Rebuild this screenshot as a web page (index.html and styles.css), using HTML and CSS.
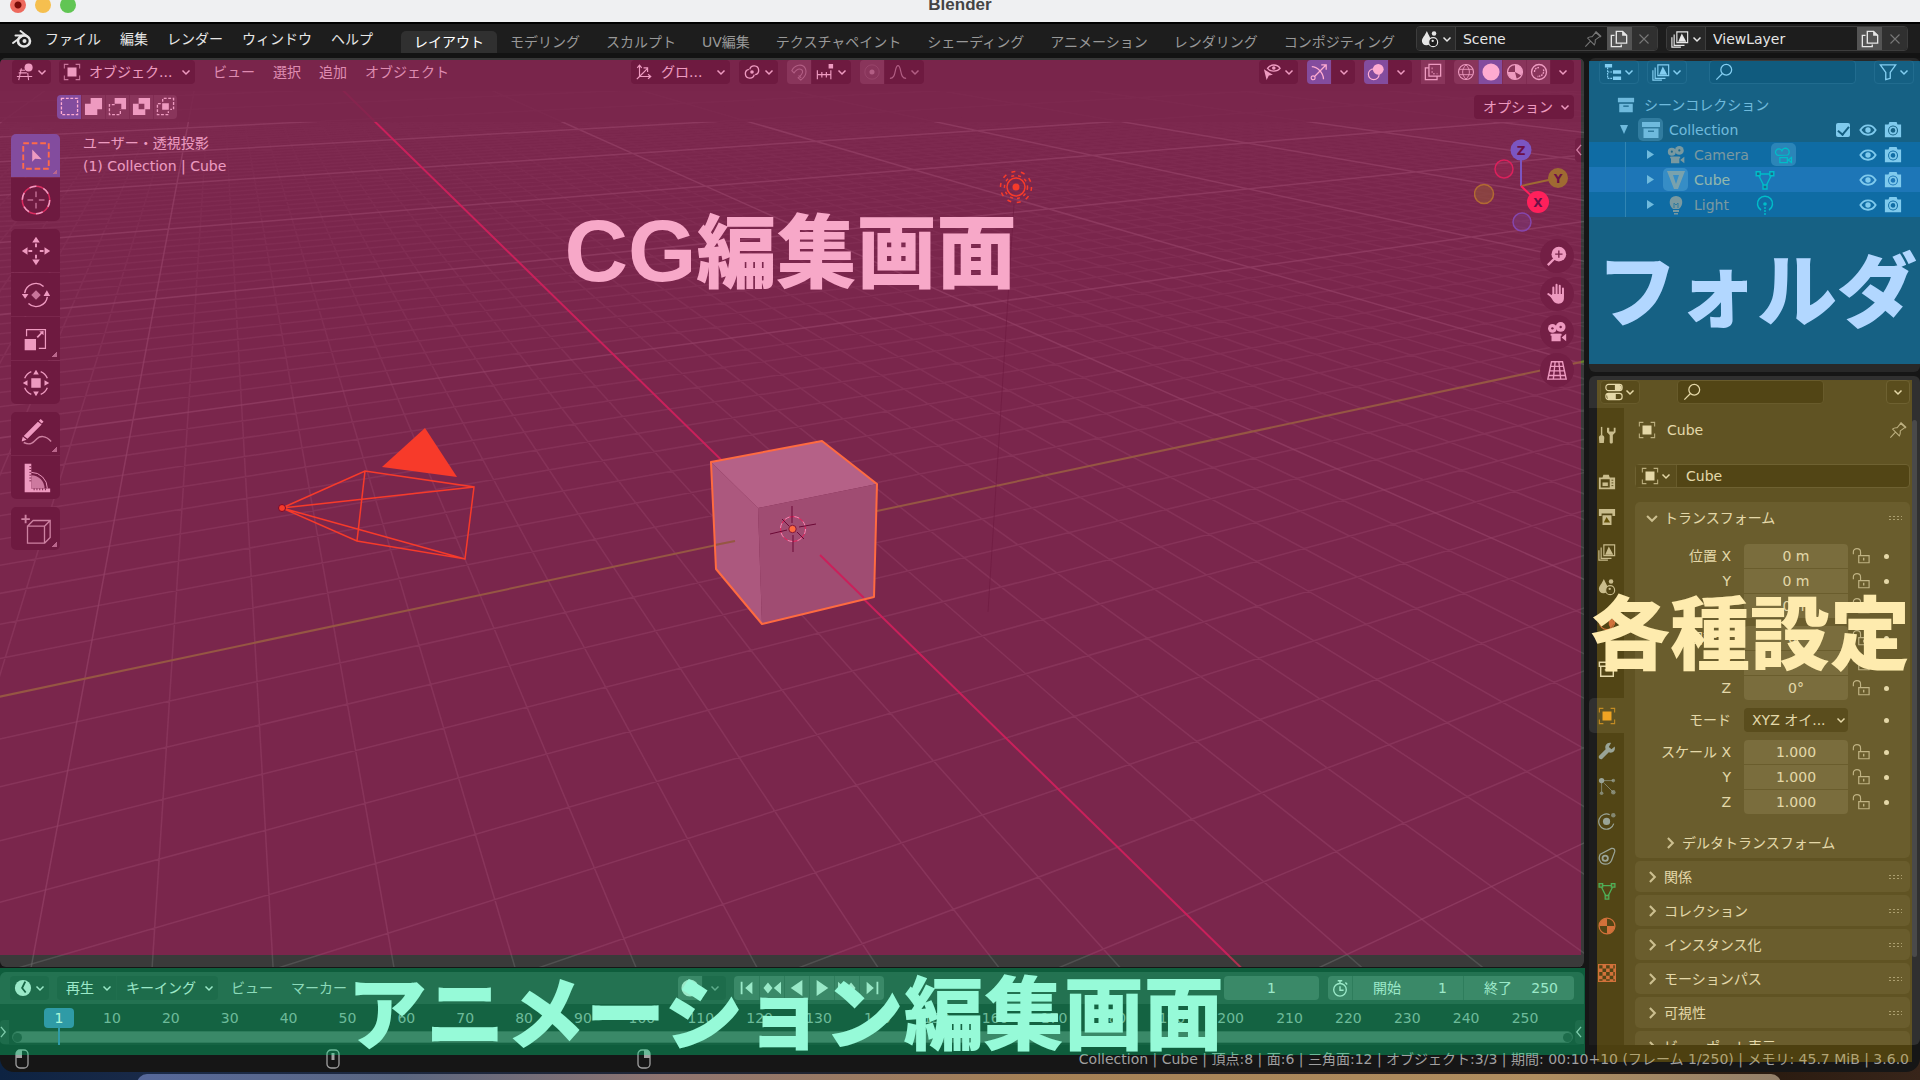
FILE: index.html
```html
<!DOCTYPE html>
<html lang="ja">
<head>
<meta charset="utf-8">
<title>Blender</title>
<link rel="stylesheet" href="styles.css">
</head>
<body>
<svg class="defs" aria-hidden="true">
  <symbol id="chev" viewBox="0 0 10 10"><path d="M1.500 3.500 5 7l3.500-3.500" fill="none" stroke="currentColor" stroke-width="1.500"/></symbol>
  <symbol id="blender" viewBox="0 0 20 20"><path d="M1 14 11 6.500H3.500M8.500 2l7 5.500" fill="none" stroke="currentColor" stroke-width="2" stroke-linecap="round" stroke-linejoin="round"/><ellipse cx="12" cy="12" rx="6" ry="5.500" fill="none" stroke="currentColor" stroke-width="2.600"/><circle cx="12.500" cy="12" r="2" fill="currentColor"/></symbol>
  <symbol id="view3d" viewBox="0 0 20 20"><path d="M4 8h6M1 15h17M6 6 3 19M13 11l1 8M3 11h9" fill="none" stroke="currentColor" stroke-width="1.200"/><circle cx="14" cy="5" r="4.500" fill="currentColor"/></symbol>
  <symbol id="object" viewBox="0 0 20 20"><path d="M5 5h10v10H5z" fill="currentColor"/><path d="M1.500 6V1.500H6M14 1.500h4.500V6M18.500 14v4.500H14M6 18.500H1.500V14" fill="none" stroke="currentColor" stroke-width="1.200" opacity=".7"/></symbol>
  <symbol id="axes" viewBox="0 0 20 20"><path d="M5 15V3M2.500 5.500 5 2.500l2.500 3M5 15h12M14.500 12.500l3 2.500-3 2.500M5 15l9-9M9.500 5.500H14V10M5 15l-3 3" fill="none" stroke="currentColor" stroke-width="1.300"/></symbol>
  <symbol id="pivot" viewBox="0 0 20 20"><circle cx="10" cy="10" r="2" fill="currentColor"/><path d="M7.500 7a5 5 0 1 1 6 6M12.500 13a5 5 0 1 1-6-6" fill="none" stroke="currentColor" stroke-width="1.500"/></symbol>
  <symbol id="magnet" viewBox="0 0 20 20"><path d="M2 8.500C5 2 14 0 17 6c2 5-1 10-5 13l-3-2.500c5-4 6-7 4-9-3-2-6 0-8.500 3.500zM9.500 14l3 2.500" fill="none" stroke="currentColor" stroke-width="1.200"/></symbol>
  <symbol id="snap" viewBox="0 0 20 20"><path d="M1 13h16M1.500 8v10M6.500 10v6M11.500 10v6M16.500 8v10" fill="none" stroke="currentColor" stroke-width="1.300"/><path d="M14 1h5v5h-5z" fill="currentColor"/></symbol>
  <symbol id="prop" viewBox="0 0 20 20"><circle cx="10" cy="10" r="8" fill="none" stroke="currentColor" opacity=".4"/><circle cx="10" cy="10" r="2.800" fill="currentColor"/></symbol>
  <symbol id="curve" viewBox="0 0 20 20"><path d="M1 17c4 0 5-3 6-8s2-6 3-6 2 1 3 6 2 8 6 8" fill="none" stroke="currentColor" stroke-width="1.300"/></symbol>
  <symbol id="selvis" viewBox="0 0 20 20"><path d="M5 6c3-5 11-5 14 0-3 4-11 4-14 0z" fill="none" stroke="currentColor" stroke-width="1.500"/><circle cx="12" cy="5.500" r="2" fill="currentColor"/><path d="M1 7l10 6-4.500 1L4 19z" fill="currentColor"/></symbol>
  <symbol id="gizmo" viewBox="0 0 20 20"><path d="M2 4c6 0 13 7 13 14M4.500 15.500 18 2M12.500 2H18v5.500" fill="none" stroke="currentColor" stroke-width="1.400"/><circle cx="3.500" cy="16.500" r="2.200" fill="none" stroke="currentColor" stroke-width="1.200"/></symbol>
  <symbol id="overlay" viewBox="0 0 20 20"><circle cx="12.500" cy="7" r="6" fill="currentColor"/><circle cx="7.500" cy="12.500" r="6" fill="none" stroke="currentColor" stroke-width="1.300"/></symbol>
  <symbol id="xray" viewBox="0 0 20 20"><path d="M5.500 1.500h13v13h-13zM5 5.500H1.500v13h13V15" fill="none" stroke="currentColor" stroke-width="1.400"/><path d="M9 5v7h6" fill="none" stroke="currentColor" stroke-dasharray="2 2"/></symbol>
  <symbol id="wire" viewBox="0 0 20 20"><circle cx="10" cy="10" r="8.300" fill="none" stroke="currentColor" stroke-width="1.200"/><path d="M10 2c-5 5-5 11 0 16M10 2c5 5 5 11 0 16M2.500 7h15M2.500 13h15" fill="none" stroke="currentColor"/></symbol>
  <symbol id="solid" viewBox="0 0 20 20"><circle cx="10" cy="10" r="9.500" fill="currentColor"/></symbol>
  <symbol id="material" viewBox="0 0 20 20"><circle cx="10" cy="10" r="8.300" fill="none" stroke="currentColor" stroke-width="1.400"/><path d="M10 2v8l7 4c3-6-1-12-7-12zM10 10H2c0 5 5 9 10 8z" fill="currentColor"/></symbol>
  <symbol id="matball" viewBox="0 0 20 20"><circle cx="10" cy="10" r="8.800" fill="none" stroke="currentColor" stroke-width="1.400"/><path d="M10 1.500V10H1.500A8.500 8.500 0 0 1 10 1.500zM10 10h8.500a8.500 8.500 0 0 1-8.500 8.500z" fill="currentColor"/></symbol>
  <symbol id="rendered" viewBox="0 0 20 20"><circle cx="10" cy="10" r="8.300" fill="none" stroke="currentColor" stroke-width="1.500"/><path d="M5 10c0-3 2-5 5-5M15 7c1 5-2 8-7 8" fill="none" stroke="currentColor" stroke-width="1.500" stroke-dasharray="2 1"/></symbol>
  <symbol id="sel1" viewBox="0 0 20 20"><path d="M1.500 1.500h17v17h-17z" fill="none" stroke="currentColor" stroke-width="1.400" stroke-dasharray="3 1.700"/></symbol>
  <symbol id="sel2" viewBox="0 0 20 20"><path d="M7 1h12v12h-5v6H1V7h6z" fill="currentColor"/></symbol>
  <symbol id="sel3" viewBox="0 0 20 20"><path d="M7 1h12v12h-5V7H7z" fill="currentColor"/><path d="M7 8H1.500v10.500H13V13" fill="none" stroke="currentColor" stroke-width="1.400" stroke-dasharray="3 1.700"/></symbol>
  <symbol id="sel4" viewBox="0 0 20 20"><path fill-rule="evenodd" d="M7 1h12v12h-5v6H1V7h6zM7 7v6h6V7z" fill="currentColor"/></symbol>
  <symbol id="sel5" viewBox="0 0 20 20"><path d="M6.500 6.500h7v7h-7z" fill="currentColor"/><path d="M7 5V1.500h11.500V13H15M5 7H1.500v11.500H13V15" fill="none" stroke="currentColor" stroke-width="1.400" stroke-dasharray="3 1.700"/></symbol>
  <symbol id="t-select" viewBox="0 0 36 36"><path d="M4.500 4.500h27v27h-27z" fill="none" stroke="#ff9f35" stroke-width="2" stroke-dasharray="6 3"/><path d="M14 11v13l3-3 7 .500z" fill="currentColor"/></symbol>
  <symbol id="t-cursor" viewBox="0 0 36 36"><circle cx="18" cy="18" r="14.500" fill="none" stroke="#c84055" stroke-width="1.600"/><circle cx="18" cy="18" r="14.500" fill="none" stroke="currentColor" stroke-width="1.600" stroke-dasharray="7.500 7.700"/><path d="M18 9v6M18 21v6M9 18h6M21 18h6" stroke="currentColor"/></symbol>
  <symbol id="t-move" viewBox="0 0 36 36"><path d="M18 3l4 6h-8zM18 33l4-6h-8zM3 18l6-4v8zM33 18l-6-4v8z" fill="currentColor"/><path d="M18 10v4M18 22v4M10 18h4M22 18h4" stroke="currentColor" stroke-width="2"/></symbol>
  <symbol id="t-rotate" viewBox="0 0 36 36"><path d="M6 16a12 12 0 0 1 20-7M30 20a12 12 0 0 1-20 7" fill="none" stroke="currentColor" stroke-width="1.500"/><path d="M3 17h7l-3.500 5zM26 19h7l-3.500-6z" fill="currentColor"/><path d="M18 13l5 5-5 5-5-5z" fill="currentColor" opacity=".7"/></symbol>
  <symbol id="t-scale" viewBox="0 0 36 36"><path d="M6 18h12v12H6zM26 9.500V14l-1.700-1.500L20 17l-1.300-1.300L23 11.500 21.500 10z" fill="currentColor"/><path d="M8 15V8h20v20h-7" fill="none" stroke="currentColor" stroke-width="1.300"/></symbol>
  <symbol id="t-transform" viewBox="0 0 36 36"><path d="M13 13h10v10H13zM18 4l3 5h-6zM18 32l3-5h-6zM4 18l5-3v6zM32 18l-5-3v6z" fill="currentColor"/><path d="M6 13a13 13 0 0 1 7-7M23 6a13 13 0 0 1 7 7M30 23a13 13 0 0 1-7 7M13 30a13 13 0 0 1-7-7" fill="none" stroke="currentColor" stroke-width="1.400"/></symbol>
  <symbol id="t-annotate" viewBox="0 0 36 36"><path d="M5 20 20 5l4 3L9 23zM3 25l1-4 4 3-5 2zM21 4l2-2 3 3-2 2z" fill="currentColor"/><path d="M5 27c8 4 11-1 14-4s9-4 15 3" fill="none" stroke="#b5c0b8" stroke-width="1.500"/></symbol>
  <symbol id="t-measure" viewBox="0 0 36 36"><path d="M6 3h7v26h20v4H6z" fill="currentColor"/><path d="M13 15a14 14 0 0 1 14 14H13z" fill="#b5b5b5"/><path d="M13 12a17 17 0 0 1 17 17" fill="none" stroke="currentColor"/><path d="M11 6h2M11 9h2M11 12h2M11 15h2M11 18h2M11 21h2M16 29v2M19 29v2M22 29v2M25 29v2M28 29v2" stroke="#333"/></symbol>
  <symbol id="t-add" viewBox="0 0 36 36"><path d="M7 3v9M2.500 7.500h9" stroke="#b5c0b8" stroke-width="2"/><path d="M9 15h18v18H9zM9 15l6-6h18v18l-6 6M27 15l6-6" fill="none" stroke="#b5c0b8" stroke-width="1.400"/></symbol>
  <symbol id="n-zoom" viewBox="0 0 24 24"><circle cx="14" cy="10" r="8" fill="currentColor"/><path d="M9 15 2 22" stroke="currentColor" stroke-width="2.500"/><path d="M14 6v8M10 10h8" stroke="#3a3a3a" stroke-width="1.500"/></symbol>
  <symbol id="n-hand" viewBox="0 0 24 24"><path d="M8 14V5M11.500 13V2M15 13V3M18.500 14V6M8 16l-5.500-4" fill="none" stroke="currentColor" stroke-width="2.200" stroke-linecap="round"/><path d="M7 12h12.600v4c0 4-2 6.500-6 6.500s-5-1.500-9-8z" fill="currentColor"/></symbol>
  <symbol id="cam" viewBox="0 0 24 24"><circle cx="7" cy="8" r="4.800" fill="currentColor"/><circle cx="16" cy="6.500" r="5.300" fill="currentColor"/><path d="M6 14h10v8H6zM17 18l5-4v8z" fill="currentColor"/><path d="M5 14h12v2H5z" fill="currentColor"/><circle cx="7" cy="8" r="1.300" fill="#333"/><circle cx="16" cy="6.500" r="1.300" fill="#333"/></symbol>
  <symbol id="camline" viewBox="0 0 24 24"><path d="M5 12.500a4 4 0 1 1 4.500-5.500 4.500 4.500 0 1 1 7 5zM7 15h9v6H7zM17 18l4-3v6z" fill="none" stroke="currentColor" stroke-width="1.500"/></symbol>
  <symbol id="n-grid" viewBox="0 0 24 24"><path d="M6 3h12l4 19H2zM5 8h14M4 13h16M3 18h18M10 3 8 22M14 3l2 19" fill="none" stroke="currentColor" stroke-width="1.500"/></symbol>
  <symbol id="scene" viewBox="0 0 20 20"><path d="M6.500 1c2 5 4.500 8 4.500 11s-2 5-5 5-5-2-5-5 3.500-6 5.500-11z" fill="currentColor"/><circle cx="14.500" cy="4" r="2.500" fill="currentColor"/><circle cx="13.500" cy="13.500" r="5" fill="#1d1d1d" stroke="currentColor" stroke-width="1.300"/><circle cx="13" cy="12" r="1.300" fill="currentColor"/></symbol>
  <symbol id="vlayer" viewBox="0 0 20 20"><path d="M6.500 2h12v12h-12zM3.500 5v12H15M1 8v11h10" fill="none" stroke="currentColor" stroke-width="1.300"/><path d="M8 13l4-9 5 9z" fill="currentColor"/></symbol>
  <symbol id="copy" viewBox="0 0 20 20"><path d="M7 1.500h7l4.500 4.500v8.500H7zM5 6H1.500v12.500h11V16" fill="none" stroke="currentColor" stroke-width="1.500"/><path d="M13.500 1v5.500H19z" fill="currentColor"/></symbol>
  <symbol id="x" viewBox="0 0 20 20"><path d="M5 5l10 10M15 5 5 15" stroke="currentColor" stroke-width="1.200"/></symbol>
  <symbol id="pin" viewBox="0 0 20 20"><path d="M1.500 18.500 7.500 12M4 9c2-2 4-1.500 5-1.500L13.500 2l5 4.500-6 4.500c0 1.500.500 3.500-1 5.500zM12 2l7 6" fill="none" stroke="currentColor" stroke-width="1.200"/></symbol>
  <symbol id="tree" viewBox="0 0 20 20"><path d="M1 1h8v4H1zM10 8h9v4h-9zM10 15h9v4h-9z" fill="currentColor"/><path d="M4 5v12h6M4 10h6" fill="none" stroke="currentColor" stroke-width="1.300" stroke-dasharray="2 1"/></symbol>
  <symbol id="search" viewBox="0 0 20 20"><circle cx="12.500" cy="7.500" r="6" fill="none" stroke="currentColor" stroke-width="1.400"/><path d="M8 12 1.500 18.500" stroke="currentColor" stroke-width="1.400"/></symbol>
  <symbol id="filter" viewBox="0 0 20 20"><path d="M1.500 2h17l-6 8.500V17l-5 1.500v-8z" fill="none" stroke="currentColor" stroke-width="1.500"/></symbol>
  <symbol id="box" viewBox="0 0 20 20"><path d="M1 2h18v5H1z" fill="currentColor"/><path fill-rule="evenodd" d="M2.500 8.500h15V18h-15zM7 10.500v1.500h6v-1.500z" fill="currentColor"/></symbol>
  <symbol id="boxline" viewBox="0 0 20 20"><path d="M1.500 2.500h17V7h-17zM3 7v11h14V7M7.500 11h5" fill="none" stroke="currentColor" stroke-width="1.600"/></symbol>
  <symbol id="eye" viewBox="0 0 20 20"><path d="M1.500 10c4-7 13-7 17 0-4 7-13 7-17 0z" fill="none" stroke="currentColor" stroke-width="2"/><circle cx="10" cy="10" r="3" fill="currentColor"/></symbol>
  <symbol id="photo" viewBox="0 0 20 20"><path fill-rule="evenodd" d="M1 4h4l1-3h8l1 3h4v14H1zM10 5a5.500 5.500 0 1 0 .1 0z" fill="currentColor"/><circle cx="10" cy="10.500" r="3.500" fill="none" stroke="currentColor" stroke-width="1.800"/></symbol>
  <symbol id="tri" viewBox="0 0 20 20"><path fill-rule="evenodd" d="M1 1h18l-7 18H8zM7 5l3 9 3-9z" fill="currentColor"/></symbol>
  <symbol id="mesh" viewBox="0 0 20 20"><path d="M3 4h14M3.500 5 9 16M16.500 5 11 16" fill="none" stroke="currentColor" stroke-width="1.400"/><path d="M1.200 1.700h4v4h-4zM14.800 1.700h4v4h-4zM8 15h4v4H8z" fill="#333" stroke="currentColor" stroke-width="1.400"/></symbol>
  <symbol id="bulb" viewBox="0 0 20 20"><path d="M7 14C2 10 2.500 1 10 1s8 9 3 13zM7 15h6v2H7zM8 18h4v1.500H8z" fill="currentColor"/><path d="M8 13V8l2 2 2-2v5" fill="none" stroke="#555"/></symbol>
  <symbol id="bulbline" viewBox="0 0 20 20"><path d="M6 15a7.500 7.500 0 1 1 8 0" fill="none" stroke="currentColor" stroke-width="1.500"/><circle cx="10" cy="9" r="1.800" fill="currentColor"/><path d="M10 12v8" stroke="currentColor" stroke-width="1.400" stroke-dasharray="2 1"/></symbol>
  <symbol id="props" viewBox="0 0 20 20"><rect x="1" y="1.500" width="18" height="7" rx="3" fill="none" stroke="currentColor" stroke-width="1.300"/><rect x="1" y="11.500" width="18" height="7" rx="3" fill="none" stroke="currentColor" stroke-width="1.300"/><path d="M11 2h5l2.500 2v3L16 8h-5zM2 12h10v6H3z" fill="currentColor"/></symbol>
  <symbol id="tool" viewBox="0 0 20 20"><path d="M4 1v9" stroke="currentColor" stroke-width="1.600"/><path d="M1 13c0-4 6-4 6 0l-.500 6h-5zM10 2v5l3 3v8c0 2 3.500 2 3.500 0v-8l3-3V2l-2 0v4h-5V2z" fill="currentColor"/></symbol>
  <symbol id="render" viewBox="0 0 20 20"><path fill-rule="evenodd" d="M1 5h4l1-3h6l1 3h6v13H1zM3 7v9h10V7z" fill="currentColor"/><path d="M4.500 10h7v5h-7zM15 8h2M15 11h2M15 14h2" fill="currentColor" stroke="#222"/></symbol>
  <symbol id="output" viewBox="0 0 20 20"><path d="M1 1h18v8h-3V6H4v3H1zM5 8h10v11H5z" fill="currentColor"/><path d="M6.500 16l3-6 4 6z" fill="#38300f"/></symbol>
  <symbol id="world" viewBox="0 0 20 20"><circle cx="10" cy="10" r="8.500" fill="none" stroke="currentColor" stroke-width="1.300"/><path d="M3 6l5-3 2 4-4 5-4-2zM12 8l5-2 1 6-4 5-2-4z" fill="currentColor"/></symbol>
  <symbol id="wrench" viewBox="0 0 20 20"><path d="M18.500 5 15 8l-3-2.500L14.500 1C10 0 7 4 8.500 8L1 15.500c-1 2 1.500 4.500 3.500 3.500L12 11.500c4 1.500 8-1.500 6.500-6.500z" fill="currentColor"/></symbol>
  <symbol id="particles" viewBox="0 0 20 20"><circle cx="4" cy="4" r="3" fill="currentColor"/><circle cx="17" cy="17" r="2.500" fill="currentColor" opacity=".7"/><circle cx="17" cy="4" r="2" fill="currentColor" opacity=".7"/><circle cx="4" cy="18" r="2" fill="currentColor" opacity=".7"/><path d="M4 4h13M4 4v13M7 7l10 10" stroke="currentColor" opacity=".7"/></symbol>
  <symbol id="physics" viewBox="0 0 20 20"><circle cx="9.500" cy="10.500" r="4" fill="currentColor"/><path d="M13 3a8.500 8.500 0 1 0 4.500 10" fill="none" stroke="currentColor" stroke-width="1.300"/><circle cx="17" cy="3.500" r="2.500" fill="currentColor" opacity=".7"/></symbol>
  <symbol id="constraint" viewBox="0 0 20 20"><circle cx="8" cy="12.500" r="3" fill="none" stroke="currentColor" stroke-width="2"/><path d="M2.500 8 15 1.500c3-.500 4 1.500 3.500 4L15 15c-3 6-11 5-13 0-1-2-.500-5 .500-7z" fill="none" stroke="currentColor" stroke-width="1.400"/></symbol>
  <symbol id="checker" viewBox="0 0 20 20"><path d="M.700.700h18.600v18.600H.700z" fill="none" stroke="currentColor" stroke-width="1.400"/><path d="M5 1h4v4H5zM13 1h4v4h-4zM1 5h4v4H1zM9 5h4v4H9zM17 5h2v4h-2zM5 9h4v4H5zM13 9h4v4h-4zM1 13h4v4H1zM9 13h4v4H9zM17 13h2v4h-2zM5 17h4v2H5zM13 17h4v2h-4z" fill="currentColor"/></symbol>
  <symbol id="lock" viewBox="0 0 20 20"><path d="M7.500 9.500h11.500v8H7.500zM1.500 8V5.500c0-5 8-5 8 0v4" fill="none" stroke="currentColor" stroke-width="1.300"/><path d="M13 12v3" stroke="currentColor" stroke-width="1.500"/></symbol>
  <symbol id="clock" viewBox="0 0 20 20"><circle cx="10" cy="10" r="9" fill="currentColor"/><path d="M12.500 3 9 10l4 5" fill="none" stroke="#222" stroke-width="2"/></symbol>
  <symbol id="stopwatch" viewBox="0 0 20 20"><circle cx="10" cy="12" r="7" fill="none" stroke="currentColor" stroke-width="1.500"/><path d="M10 8v4.500h4M7.500 2h5M10 2v3M16 4l2 2" fill="none" stroke="currentColor" stroke-width="1.600"/></symbol>
  <symbol id="p1" viewBox="0 0 20 20"><path d="M4 3v14" stroke="currentColor" stroke-width="2"/><path d="M16 3v14l-8-7z" fill="currentColor"/></symbol>
  <symbol id="p2" viewBox="0 0 20 20"><path d="M5.500 4l5 6-5 6-5-6zM20 3v14l-8-7z" fill="currentColor"/></symbol>
  <symbol id="p3" viewBox="0 0 20 20"><path d="M16 1v18L3 10z" fill="currentColor"/></symbol>
  <symbol id="mouse" viewBox="0 0 14 20"><rect x="1" y="1" width="12" height="18" rx="4" fill="none" stroke="currentColor" stroke-width="1.300"/></symbol>
</svg>

<div class="window">
  <header class="titlebar">
    <div class="lights"><span class="light close"></span><span class="light min"></span><span class="light max"></span></div>
    <h1>Blender</h1>
  </header>

  <div class="topbar">
    <nav class="menus">
      <svg class="i logo"><use href="#blender"/></svg>
      <button>ファイル</button><button>編集</button><button>レンダー</button><button>ウィンドウ</button><button>ヘルプ</button>
    </nav>
    <nav class="tabs">
      <button class="on">レイアウト</button><button>モデリング</button><button>スカルプト</button><button>UV編集</button><button>テクスチャペイント</button><button>シェーディング</button><button>アニメーション</button><button>レンダリング</button><button>コンポジティング</button>
    </nav>
    <div class="idblock">
      <button class="pick" aria-label="シーン"><svg class="i"><use href="#scene"/></svg><svg class="c"><use href="#chev"/></svg></button>
      <input aria-label="Scene" value="Scene"><svg class="i pin"><use href="#pin"/></svg>
      <button class="new" aria-label="新規"><svg class="i"><use href="#copy"/></svg></button><button class="del" aria-label="削除"><svg class="i"><use href="#x"/></svg></button>
    </div>
    <div class="idblock">
      <button class="pick" aria-label="ビューレイヤー"><svg class="i"><use href="#vlayer"/></svg><svg class="c"><use href="#chev"/></svg></button>
      <input aria-label="ViewLayer" value="ViewLayer">
      <button class="new" aria-label="新規"><svg class="i"><use href="#copy"/></svg></button><button class="del" aria-label="削除"><svg class="i"><use href="#x"/></svg></button>
    </div>
  </div>

  <main class="work">
    <div class="left">
      <section class="viewport">
        <svg class="scene" viewBox="0 91 1584 876" preserveAspectRatio="xMidYMid slice">
          <defs>
            <linearGradient id="fade" x1="0" y1="91" x2="0" y2="967" gradientUnits="userSpaceOnUse"><stop offset="0" stop-color="#fff" stop-opacity=".12"/><stop offset=".15" stop-color="#fff" stop-opacity=".35"/><stop offset=".4" stop-color="#fff" stop-opacity=".75"/><stop offset="1" stop-color="#fff"/></linearGradient>
            <mask id="far" maskUnits="userSpaceOnUse" x="0" y="91" width="1584" height="876"><rect x="0" y="91" width="1584" height="876" fill="url(#fade)"/></mask>
          </defs>
          <g mask="url(#far)"><path id="minor" class="minor"/></g>
          <path id="major" class="major"/>
          <path id="axisY" class="axis-y"/>
          <path id="axisX" class="axis-x"/>
          <path d="M1014 204 988 612" stroke="#222" stroke-opacity=".5"/>
          <g fill="none" stroke="#f45706" stroke-width="1.500"><circle cx="1016" cy="187" r="9"/><circle cx="1016" cy="187" r="11.500" stroke-dasharray="3 4"/><circle cx="1016" cy="187" r="15.500" stroke-dasharray="4 5.700"/></g>
          <circle cx="1016" cy="187" r="3.500" fill="#f45706"/>
          <path d="M425 428 382 467l75 10z" fill="#f45706"/>
          <path d="M282 508 365 471l109 16-9 72-108-18zM282 508l192-21M282 508l183 51M365 471l-8 70" fill="none" stroke="#f45706" stroke-width="1.500"/>
          <circle cx="282" cy="508" r="3.500" fill="#f45706" stroke="#301010"/>
          <path d="M711 462 822 441 877 484 758 508z" fill="#919191"/>
          <path d="M711 462 758 508 762 624 716 569z" fill="#838383"/>
          <path d="M758 508 877 484 874 597 762 624z" fill="#727272"/>
          <path d="M715 545 735 541" class="axis-y"/><path d="M820 555 864 598" class="axis-x"/>
          <path d="M711 462 822 441 877 484 874 597 762 624 716 569z" fill="none" stroke="#ff9e28" stroke-width="2" stroke-linejoin="round"/>
          <circle cx="793" cy="529" r="12.500" fill="none" stroke="#e3304f"/><circle cx="793" cy="529" r="12.500" fill="none" stroke="#ddd" stroke-dasharray="5 5"/>
          <path d="M792 506v17M793 535v17M770 534l17-4M799 527l17-3M782 519l7 7M797 532l7 7" stroke="#230d18"/>
          <circle cx="792.500" cy="529" r="3.700" fill="#ff9e28" stroke="#402020"/>
        </svg>
        <div class="header">
          <button class="dd" aria-label="エディタータイプ"><svg class="i"><use href="#view3d"/></svg><svg class="c"><use href="#chev"/></svg></button>
          <label class="dd mode"><svg class="i"><use href="#object"/></svg><select aria-label="モード"><option>オブジェク...</option></select><svg class="c"><use href="#chev"/></svg></label>
          <nav class="hmenus"><button>ビュー</button><button>選択</button><button>追加</button><button>オブジェクト</button></nav>
          <div class="mid">
            <label class="dd orient"><svg class="i"><use href="#axes"/></svg><select aria-label="座標系"><option>グロ...</option></select><svg class="c"><use href="#chev"/></svg></label>
            <button class="dd" aria-label="ピボット"><svg class="i"><use href="#pivot"/></svg><svg class="c"><use href="#chev"/></svg></button>
            <div class="grp"><button class="sq lit dim" aria-label="スナップ"><svg class="i"><use href="#magnet"/></svg></button><button class="dd" aria-label="スナップ先"><svg class="i"><use href="#snap"/></svg><svg class="c"><use href="#chev"/></svg></button></div>
            <div class="grp dim"><button class="sq lit" aria-label="プロポーショナル編集"><svg class="i"><use href="#prop"/></svg></button><button class="dd" aria-label="減衰"><svg class="i"><use href="#curve"/></svg><svg class="c"><use href="#chev"/></svg></button></div>
          </div>
          <div class="end">
            <button class="dd" aria-label="選択可否"><svg class="i"><use href="#selvis"/></svg><svg class="c"><use href="#chev"/></svg></button>
            <div class="grp"><button class="sq on" aria-label="ギズモ"><svg class="i"><use href="#gizmo"/></svg></button><button class="sq" aria-label="ギズモ設定"><svg class="c"><use href="#chev"/></svg></button></div>
            <div class="grp"><button class="sq on" aria-label="オーバーレイ"><svg class="i"><use href="#overlay"/></svg></button><button class="sq" aria-label="オーバーレイ設定"><svg class="c"><use href="#chev"/></svg></button></div>
            <button class="sq lit" aria-label="透過"><svg class="i"><use href="#xray"/></svg></button>
            <div class="grp"><button class="sq lit" aria-label="ワイヤー"><svg class="i"><use href="#wire"/></svg></button><button class="sq on" aria-label="ソリッド"><svg class="i"><use href="#solid"/></svg></button><button class="sq lit" aria-label="マテリアル"><svg class="i"><use href="#material"/></svg></button><button class="sq lit" aria-label="レンダー"><svg class="i"><use href="#rendered"/></svg></button><button class="sq" aria-label="シェーディング設定"><svg class="c"><use href="#chev"/></svg></button></div>
          </div>
        </div>
        <div class="header toolrow">
          <div class="grp selmodes"><button class="sq on" aria-label="新規選択"><svg class="i"><use href="#sel1"/></svg></button><button class="sq lit" aria-label="追加選択"><svg class="i"><use href="#sel2"/></svg></button><button class="sq lit" aria-label="減算"><svg class="i"><use href="#sel3"/></svg></button><button class="sq lit" aria-label="反転"><svg class="i"><use href="#sel4"/></svg></button><button class="sq lit" aria-label="交差"><svg class="i"><use href="#sel5"/></svg></button></div>
          <button class="dd options">オプション<svg class="c"><use href="#chev"/></svg></button>
        </div>
        <div class="stage">
          <div class="tools">
            <div class="tgroup"><button class="on more" aria-label="選択"><svg><use href="#t-select"/></svg></button><button aria-label="カーソル"><svg><use href="#t-cursor"/></svg></button></div>
            <div class="tgroup"><button aria-label="移動"><svg><use href="#t-move"/></svg></button><button aria-label="回転"><svg><use href="#t-rotate"/></svg></button><button class="more" aria-label="スケール"><svg><use href="#t-scale"/></svg></button><button aria-label="トランスフォーム"><svg><use href="#t-transform"/></svg></button></div>
            <div class="tgroup"><button class="more" aria-label="アノテート"><svg><use href="#t-annotate"/></svg></button><button aria-label="メジャー"><svg><use href="#t-measure"/></svg></button></div>
            <div class="tgroup"><button class="more" aria-label="立方体を追加"><svg><use href="#t-add"/></svg></button></div>
          </div>
          <p class="viewname">ユーザー・透視投影<br>(1) Collection | Cube</p>
          <div class="navcol">
            <svg class="gizmo" viewBox="0 0 100 100">
              <path d="M47 50V24" stroke="#3b7fe8" stroke-width="2"/><path d="M47 50 84 42" stroke="#719e12" stroke-width="2"/><path d="M47 50 64 66" stroke="#ff3050" stroke-width="2"/>
              <circle cx="30" cy="33" r="9" fill="#ff3050" fill-opacity=".12" stroke="#c93050" stroke-width="1.500"/><circle cx="10" cy="58" r="9.500" fill="#719e12" fill-opacity=".4" stroke="#8d9e12" stroke-width="1.500"/><circle cx="48" cy="86" r="9" fill="#3b7fe8" fill-opacity=".2" stroke="#4a68c8" stroke-width="1.500"/>
              <circle cx="47" cy="14" r="10.500" fill="#3b7fe8"/><circle cx="84" cy="42" r="10" fill="#719e12"/><circle cx="64" cy="66" r="11" fill="#ff3050"/>
              <g font-family="DejaVu Sans" font-weight="bold" font-size="12" text-anchor="middle" fill="#251830"><text x="47" y="19">Z</text><text x="84" y="47">Y</text><text x="64" y="71">X</text></g>
            </svg>
            <button aria-label="ズーム"><svg><use href="#n-zoom"/></svg></button><button aria-label="パン"><svg><use href="#n-hand"/></svg></button><button aria-label="カメラ"><svg><use href="#cam"/></svg></button><button aria-label="透視/平行"><svg><use href="#n-grid"/></svg></button>
          </div>
          <button class="sidetab" aria-label="サイドバー"><svg viewBox="0 0 8 14"><path d="M7 1 2 7l5 6" fill="none" stroke="#bbb" stroke-width="1.500"/></svg></button>
        </div>
        <div class="zone pink"><span><span class="latin">CG</span>編集画面</span></div>
      </section>

      <section class="timeline">
        <div class="header">
          <button class="dd" aria-label="エディタータイプ"><svg class="i"><use href="#clock"/></svg><svg class="c"><use href="#chev"/></svg></button>
          <div class="grp play"><button class="dd">再生<svg class="c"><use href="#chev"/></svg></button><button class="dd">キーイング<svg class="c"><use href="#chev"/></svg></button></div>
          <nav class="hmenus"><button>ビュー</button><button>マーカー</button></nav>
          <div class="mid">
            <div class="grp"><button class="sq lit" aria-label="自動キー"><svg class="i"><use href="#solid"/></svg></button><button class="sq dim" aria-label="自動キー設定"><svg class="c"><use href="#chev"/></svg></button></div>
            <div class="grp transport"><button class="sq lit" aria-label="最初へ"><svg class="i"><use href="#p1"/></svg></button><button class="sq lit" aria-label="前のキー"><svg class="i"><use href="#p2"/></svg></button><button class="sq lit" aria-label="逆再生"><svg class="i"><use href="#p3"/></svg></button><button class="sq lit flip" aria-label="再生"><svg class="i"><use href="#p3"/></svg></button><button class="sq lit flip" aria-label="次のキー"><svg class="i"><use href="#p2"/></svg></button><button class="sq lit flip" aria-label="最後へ"><svg class="i"><use href="#p1"/></svg></button></div>
          </div>
          <div class="end">
            <input class="frame" aria-label="現在のフレーム" value="1">
            <div class="grp range"><button class="sq lit" aria-label="プレビュー範囲"><svg class="i"><use href="#stopwatch"/></svg></button><label>開始<input value="1"></label><label>終了<input value="250"></label></div>
          </div>
        </div>
        <div class="track">
          <div class="ticks"><span>10</span><span>20</span><span>30</span><span>40</span><span>50</span><span>60</span><span>70</span><span>80</span><span>90</span><span>100</span><span>110</span><span>120</span><span>130</span><span>140</span><span>150</span><span>160</span><span>170</span><span>180</span><span>190</span><span>200</span><span>210</span><span>220</span><span>230</span><span>240</span><span>250</span></div>
          <div class="hscroll"></div>
          <span class="playhead">1</span>
          <button class="sidetab" aria-label="サイドバー"><svg viewBox="0 0 8 14"><path d="M7 1 2 7l5 6" fill="none" stroke="#bbb" stroke-width="1.500"/></svg></button>
          <button class="sidetab start" aria-label="チャンネル"><svg viewBox="0 0 8 14"><path d="M1 1l5 6-5 6" fill="none" stroke="#bbb" stroke-width="1.500"/></svg></button>
        </div>
        <div class="zone green"><span>アニメーション編集画面</span></div>
      </section>
    </div>

    <div class="right">
      <section class="outliner">
        <div class="header">
          <button class="dd" aria-label="エディタータイプ"><svg class="i"><use href="#tree"/></svg><svg class="c"><use href="#chev"/></svg></button>
          <button class="dd" aria-label="表示モード"><svg class="i"><use href="#vlayer"/></svg><svg class="c"><use href="#chev"/></svg></button>
          <label class="find"><svg class="i"><use href="#search"/></svg><input aria-label="検索"></label>
          <button class="dd" aria-label="フィルター"><svg class="i"><use href="#filter"/></svg><svg class="c"><use href="#chev"/></svg></button>
        </div>
        <ul class="rows">
          <li class="d0"><svg class="i"><use href="#box"/></svg><span>シーンコレクション</span></li>
          <li class="d1"><i class="arrow open"></i><span class="chip"><svg class="i"><use href="#box"/></svg></span><span class="name">Collection</span><span class="vis"><input type="checkbox" checked aria-label="有効"><svg class="i"><use href="#eye"/></svg><svg class="i"><use href="#photo"/></svg></span></li>
          <li class="d2 sel"><i class="arrow"></i><span class="chip off"><svg class="i"><use href="#cam"/></svg></span><span class="name w-cam">Camera</span><span class="chip data"><svg class="i"><use href="#camline"/></svg></span><span class="vis"><svg class="i"><use href="#eye"/></svg><svg class="i"><use href="#photo"/></svg></span></li>
          <li class="d2 active"><i class="arrow"></i><span class="chip"><svg class="i"><use href="#tri"/></svg></span><span class="name w-cube">Cube</span><span class="chip off data"><svg class="i"><use href="#mesh"/></svg></span><span class="vis"><svg class="i"><use href="#eye"/></svg><svg class="i"><use href="#photo"/></svg></span></li>
          <li class="d2 sel"><i class="arrow"></i><span class="chip off"><svg class="i"><use href="#bulb"/></svg></span><span class="name w-cube">Light</span><span class="chip off data"><svg class="i"><use href="#bulbline"/></svg></span><span class="vis"><svg class="i"><use href="#eye"/></svg><svg class="i"><use href="#photo"/></svg></span></li>
        </ul>
        <div class="zone blue"><span>フォルダ</span></div>
      </section>

      <section class="properties">
        <div class="header">
          <button class="dd" aria-label="エディタータイプ"><svg class="i"><use href="#props"/></svg><svg class="c"><use href="#chev"/></svg></button>
          <label class="find"><svg class="i"><use href="#search"/></svg><input aria-label="検索"></label>
          <button class="sq drop" aria-label="オプション"><svg class="c"><use href="#chev"/></svg></button>
        </div>
        <div class="pbody">
          <nav class="ptabs">
            <div><button aria-label="ツール"><svg class="i"><use href="#tool"/></svg></button></div>
            <div><button aria-label="レンダー"><svg class="i"><use href="#render"/></svg></button><button aria-label="出力"><svg class="i"><use href="#output"/></svg></button><button aria-label="ビューレイヤー"><svg class="i"><use href="#vlayer"/></svg></button><button aria-label="シーン"><svg class="i"><use href="#scene"/></svg></button><button class="red" aria-label="ワールド"><svg class="i"><use href="#world"/></svg></button></div>
            <div><button class="bright" aria-label="コレクション"><svg class="i"><use href="#boxline"/></svg></button></div>
            <div><button class="on" aria-label="オブジェクト"><svg class="i"><use href="#object"/></svg></button><button class="steel" aria-label="モディファイアー"><svg class="i"><use href="#wrench"/></svg></button><button class="steel" aria-label="パーティクル"><svg class="i"><use href="#particles"/></svg></button><button class="steel" aria-label="物理演算"><svg class="i"><use href="#physics"/></svg></button><button class="steel" aria-label="コンストレイント"><svg class="i"><use href="#constraint"/></svg></button><button class="grn" aria-label="データ"><svg class="i"><use href="#mesh"/></svg></button><button class="red" aria-label="マテリアル"><svg class="i"><use href="#matball"/></svg></button></div>
            <div><button class="red" aria-label="テクスチャ"><svg class="i"><use href="#checker"/></svg></button></div>
          </nav>
          <div class="pmain">
            <div class="crumb"><svg class="i"><use href="#object"/></svg><span>Cube</span><svg class="i"><use href="#pin"/></svg></div>
            <div class="idrow"><button class="dd" aria-label="オブジェクト"><svg class="i"><use href="#object"/></svg><svg class="c"><use href="#chev"/></svg></button><input aria-label="名前" value="Cube"></div>
            <div class="panel">
              <button class="ptitle open"><svg class="c"><use href="#chev"/></svg>トランスフォーム<i class="grip"></i></button>
              <div class="vec">
                <div class="f"><label for="lx">位置 X</label><input id="lx" value="0 m"><svg class="i"><use href="#lock"/></svg><b></b></div>
                <div class="f"><label for="ly">Y</label><input id="ly" value="0 m"><svg class="i"><use href="#lock"/></svg><b></b></div>
                <div class="f"><label for="lz">Z</label><input id="lz" value="0 m"><svg class="i"><use href="#lock"/></svg><b></b></div>
              </div>
              <div class="vec">
                <div class="f"><label for="rx">回転 X</label><input id="rx" value="0°"><svg class="i"><use href="#lock"/></svg><b></b></div>
                <div class="f"><label for="ry">Y</label><input id="ry" value="0°"><svg class="i"><use href="#lock"/></svg><b></b></div>
                <div class="f"><label for="rz">Z</label><input id="rz" value="0°"><svg class="i"><use href="#lock"/></svg><b></b></div>
              </div>
              <div class="vec"><div class="f"><label for="md">モード</label><span class="dd choice"><select id="md"><option>XYZ オイ...</option></select><svg class="c"><use href="#chev"/></svg></span><span class="i"></span><b></b></div></div>
              <div class="vec">
                <div class="f"><label for="sx">スケール X</label><input id="sx" value="1.000"><svg class="i"><use href="#lock"/></svg><b></b></div>
                <div class="f"><label for="sy">Y</label><input id="sy" value="1.000"><svg class="i"><use href="#lock"/></svg><b></b></div>
                <div class="f"><label for="sz">Z</label><input id="sz" value="1.000"><svg class="i"><use href="#lock"/></svg><b></b></div>
              </div>
              <button class="ptitle sub"><svg class="c"><use href="#chev"/></svg>デルタトランスフォーム</button>
            </div>
            <div class="panel"><button class="ptitle"><svg class="c"><use href="#chev"/></svg>関係<i class="grip"></i></button></div>
            <div class="panel"><button class="ptitle"><svg class="c"><use href="#chev"/></svg>コレクション<i class="grip"></i></button></div>
            <div class="panel"><button class="ptitle"><svg class="c"><use href="#chev"/></svg>インスタンス化<i class="grip"></i></button></div>
            <div class="panel"><button class="ptitle"><svg class="c"><use href="#chev"/></svg>モーションパス<i class="grip"></i></button></div>
            <div class="panel"><button class="ptitle"><svg class="c"><use href="#chev"/></svg>可視性<i class="grip"></i></button></div>
            <div class="panel"><button class="ptitle"><svg class="c"><use href="#chev"/></svg>ビューポート表示<i class="grip"></i></button></div>
          </div>
          <div class="vscroll"></div>
        </div>
        <div class="zone yellow"><span>各種設定</span></div>
      </section>
    </div>
  </main>

  <footer class="status">
    <div class="hints">
      <span><svg viewBox="0 0 14 20"><use href="#mouse"/><path d="M1 9V5c0-3 2-4 6-4v8z" fill="currentColor"/></svg></span>
      <span><svg viewBox="0 0 14 20"><use href="#mouse"/><path d="M5.500 4h3v7h-3z" fill="currentColor"/></svg></span>
      <span><svg viewBox="0 0 14 20"><use href="#mouse"/><path d="M13 9V5c0-3-2-4-6-4v8z" fill="currentColor"/></svg></span>
    </div>
    <p>Collection | Cube | 頂点:8 | 面:6 | 三角面:12 | オブジェクト:3/3 | 期間: 00:10+10 (フレーム 1/250) | メモリ: 45.7 MiB | 3.6.0</p>
  </footer>
</div>
<div class="desktop"><div class="dock"></div></div>
<script src="grid.js"></script>
</body>
</html>
```

FILE: styles.css
```css
* { box-sizing: border-box; }
body {
  margin: 0;
  height: 100vh;
  display: flex;
  flex-direction: column;
  overflow: hidden;
  background: linear-gradient(90deg, #0d2342, #1a2a48 8%, #2a1b10 92%, #38251a);
  color: #e6e6e6;
  font: 14px/20px "DejaVu Sans", "Noto Sans CJK JP", sans-serif;
}
button, input, select {
  font: inherit;
  color: inherit;
  background: none;
  border: 0;
  padding: 0;
  margin: 0;
  min-width: 0;
  appearance: none;
  outline: 0;
}
button { white-space: nowrap; }
p, h1, ul { margin: 0; padding: 0; }
.defs { position: absolute; width: 0; height: 0; }
.i { width: 18px; height: 18px; flex: none; }
.c { width: 10px; height: 10px; flex: none; }

.window {
  flex: 1;
  min-height: 0;
  display: flex;
  flex-direction: column;
  background: #161616;
  border-radius: 0 0 14px 14px;
}

/* title bar */
.titlebar {
  height: 24px;
  flex: none;
  display: grid;
  grid-template-columns: 1fr auto 1fr;
  background: #eff0f2;
  border-bottom: 2px solid #000;
  overflow: hidden;
}
.titlebar h1 {
  font: bold 17px/18px "Liberation Sans", sans-serif;
  color: #444;
  margin-top: -4px;
}
.lights { display: flex; gap: 9px; padding-left: 10px; margin-top: -3px; }
.light { width: 16px; height: 16px; border-radius: 50%; }
.close { background: radial-gradient(circle, #7a0c08 3px, #ed6a5e 4px); }
.min { background: #f5bf4f; }
.max { background: #61c554; }

/* top bar */
.topbar {
  height: 34px;
  flex: none;
  display: flex;
  align-items: center;
  background: linear-gradient(#1d1d1d 29px, #131313 29px);
  padding: 0 12px 5px 11px;
}
.menus { display: flex; align-items: center; gap: 19px; }
.menus .logo { width: 22px; height: 20px; margin-right: -7px; }
.tabs { display: flex; align-self: stretch; padding-top: 7px; margin: 0 auto 0 28px; }
.tabs button { padding: 0 13px; color: #989898; border-radius: 5px 5px 0 0; }
.tabs .on { background: #303030; color: #fff; }
.idblock {
  width: 243px;
  height: 25px;
  margin-left: 8px;
  display: flex;
  align-items: center;
  border: 1px solid #3d3d3d;
  border-radius: 4px;
  background: #1d1d1d;
  overflow: hidden;
}
.idblock .pick { display: flex; align-items: center; gap: 3px; width: 39px; height: 100%; padding-left: 4px; background: #282828; border-right: 1px solid #3d3d3d; }
.idblock input { flex: 1; padding-left: 7px; }
.idblock .pin { color: #777; margin-right: 5px; }
.idblock .new { width: 25px; height: 100%; background: #545454; }
.idblock .del { width: 25px; height: 100%; background: #303030; color: #777; }
.idblock button .i { display: block; margin: auto; }
.idblock .pick .i { margin: 0; }

/* areas */
.work {
  flex: 1;
  min-height: 0;
  display: grid;
  grid-template-columns: minmax(0, 1fr) 331px;
  gap: 5px;
}
.left, .right { min-width: 0; min-height: 0; display: flex; flex-direction: column; gap: 4px; }
.left { gap: 5px; }
section { position: relative; }
.header { display: flex; align-items: center; }
.dd, .sq, .grp, .find {
  height: 24px;
  display: flex;
  align-items: center;
  border-radius: 4px;
}
.dd { background: #282828; padding: 0 4px; gap: 3px; min-width: 39px; }
.sq { width: 24px; justify-content: center; background: #282828; border-radius: 0; }
.grp { overflow: hidden; }
.grp .dd { border-radius: 0; }
.grp > * + * { border-left: 1px solid #33333380; }
.lit { background: #505050; }
.on.sq { background: #4772b3; color: #fff; }
.dim { color: #8c8c8c; }
.hmenus { display: flex; }
.hmenus button { padding: 0 9px; color: #d0d0d0; }
.mid, .end { display: flex; gap: 9px; }
.end { margin-left: auto; }

.viewport {
  flex: 1;
  min-height: 0;
  background: #3a3a3a;
  border-radius: 6px;
  overflow: hidden;
  display: flex;
  flex-direction: column;
}
.viewport .header { position: relative; height: 33px; flex: none; padding: 0 10px 6px 12px; gap: 8px; background: #383838; }
.viewport .hmenus { margin-left: 1px; }
.mode { width: 136px; }
.mode select { flex: 1; padding-left: 5px; }
.orient { width: 99px; }
.orient select { flex: 1; padding-left: 5px; }
.viewport .mid { margin-left: 165px; }
.viewport .toolrow { height: 31px; padding: 0 10px 0 57px; background: #393939d8; }
.selmodes .i { width: 19px; height: 19px; }
.options { margin-left: auto; width: 100px; padding: 0 4px 0 9px; justify-content: space-between; }
.scene { position: absolute; top: 33px; left: 0; width: 100%; height: calc(100% - 33px); }
.minor { fill: none; stroke: #505050; stroke-width: 1.500; }
.major { fill: none; stroke: #666; stroke-width: 1.500; opacity: .6; }
.axis-x { fill: none; stroke: #b03050; stroke-width: 2; }
.axis-y { fill: none; stroke: #63802c; stroke-width: 2; }

.stage { position: relative; flex: 1; display: flex; align-items: flex-start; }
.tools { display: flex; flex-direction: column; gap: 8px; padding: 12px 0 0 11px; width: 60px; }
.tgroup { display: grid; gap: 1px; border-radius: 5px; overflow: hidden; }
.tgroup button { position: relative; height: 43px; background: #282828; display: grid; place-items: center; }
.tgroup svg { width: 34px; height: 34px; }
.tgroup .on { background: #4772b3; }
.more::after {
  content: "";
  position: absolute;
  right: 3px;
  bottom: 3px;
  width: 5px;
  height: 5px;
  background: linear-gradient(135deg, transparent 50%, #999 50%);
}
.viewname { padding: 10px 0 0 23px; line-height: 23px; }
.navcol { margin-left: auto; padding: 14px 10px 0 0; display: flex; flex-direction: column; align-items: flex-end; gap: 4px; }
.gizmo { width: 100px; height: 100px; margin-bottom: -1px; }
.navcol button { width: 34px; height: 34px; border-radius: 50%; background: #2f2f2f; display: grid; place-items: center; }
.navcol button svg { width: 22px; height: 22px; }
.sidetab { position: absolute; right: 0; top: 16px; width: 9px; height: 24px; background: #303030; border-radius: 4px 0 0 4px; }
.sidetab svg { width: 7px; height: 12px; display: block; }
.sidetab.start { right: auto; left: 0; }

/* timeline */
.timeline { height: 73px; flex: none; background: #1f1f1f; border-radius: 6px; z-index: 2; }
.timeline .header { height: 32px; padding: 0 10px; gap: 8px; background: #353535; border-radius: 6px 6px 0 0; }
.timeline .dd, .timeline .sq { background: #2c2c2c; }
.timeline .sq.lit, .range label, .frame { background: #575757; }
.play .dd { gap: 8px; padding: 0 4px 0 9px; }
.timeline .hmenus { margin-left: -4px; }
.timeline .mid { margin-left: 314px; gap: 8px; }
.flip .i { transform: scaleX(-1); }
.transport .sq { width: 25px; }
.frame { width: 95px; height: 24px; border-radius: 4px; text-align: center; }
.range label { display: flex; width: 111px; height: 24px; align-items: center; padding: 0 16px 0 20px; }
.range label input { flex: 1; width: 20px; text-align: right; }
.track { position: relative; height: 41px; padding: 4px 11px 0 12px; }
.track .sidetab { background: #2c2c2c; }
.ticks { display: flex; justify-content: space-between; padding: 0 28px 0 80px; color: #a2a2a2; }
.ticks span { width: 40px; text-align: center; }
.hscroll { display: flex; justify-content: space-between; align-items: center; height: 12px; margin-top: 3px; border-radius: 6px; background: #575757; border: 1px solid #444; }
.hscroll::before, .hscroll::after { content: ""; width: 9px; height: 9px; border-radius: 50%; background: #2c2c2c; }
.playhead { position: absolute; left: 44px; top: 4px; width: 30px; height: 20px; border-radius: 4px; background: #4772b3; text-align: center; color: #fff; }
.playhead::after { content: ""; position: absolute; left: 14px; top: 20px; width: 2px; height: 17px; background: #4772b3; }

/* outliner */
.outliner { height: 314px; flex: none; background: #282828; border-radius: 6px; }
.right .header { height: 32px; padding: 0 6px 4px 10px; gap: 8px; }
.right .dd, .find { background: #262626; border: 1px solid #3b3b3b; }
.right .dd { gap: 2px; }
.find { width: 147px; padding-left: 5px; background: #1d1d1d; }
.find input { width: 100px; }
.outliner .find { margin: 0 auto 0 14px; }
.rows { list-style: none; padding-top: 2px; }
.rows li { height: 25px; display: flex; align-items: center; padding-right: 18px; color: #c3c3c3; }
.rows .d0 { padding-left: 28px; gap: 9px; }
.rows .d1 { padding-left: 31px; }
.rows .d2 { padding-left: 56px; position: relative; }
.rows .d2::before { content: ""; position: absolute; left: 36px; top: 0; bottom: 0; border-left: 1px solid #55667a; }
.arrow { width: 10px; height: 9px; background: #c3c3c3; clip-path: polygon(2px 0, 9px 50%, 2px 100%); }
.arrow.open { clip-path: polygon(0 0, 8px 0, 4px 100%); }
.chip { width: 25px; height: 23px; margin: 0 6px 0 8px; display: grid; place-items: center; border-radius: 5px; background: #ffffff38; }
.chip.off { background: none; }
.chip .i { width: 20px; height: 20px; }
.sel { background: #1c3b60; }
.rows .active { background: #334d80; color: #ffaf60; }
.rows .sel .name, .rows .sel .chip { color: #d58a58; }
.rows .active .name { color: #ffc070; }
.rows .active .chip { color: #d59a70; }
.rows .chip.data { color: #00c8a0; margin: 0; }
.w-cam { width: 77px; }
.w-cube { width: 58px; }
.vis { margin-left: auto; display: flex; align-items: center; gap: 7px; color: #e0e0e0; }
.vis input { width: 14px; height: 14px; background: #e0e0e0; border-radius: 2px; position: relative; margin-right: 2px; }
.vis input::after { content: ""; position: absolute; left: 4px; top: 1px; width: 5px; height: 9px; border: solid #222; border-width: 0 2px 2px 0; transform: rotate(40deg); }

/* properties */
.properties { flex: 1; min-height: 0; background: #303030; border-radius: 6px; display: flex; flex-direction: column; }
.properties .header { flex: none; padding: 0 10px 0 11px; gap: 0; }
.properties .find { margin: 0 auto 0 37px; }
.drop { border: 1px solid #444; border-radius: 4px; }
.pbody { flex: 1; min-height: 0; display: flex; overflow: hidden; }
.ptabs { width: 35px; background: #1d1d1d; padding-top: 9px; display: flex; flex-direction: column; gap: 12px; color: #c0c0c0; }
.ptabs button { display: grid; place-items: center; width: 35px; height: 35px; }
.ptabs .on { background: #303030; color: #f5a030; border-radius: 5px 0 0 5px; }
.ptabs .steel { color: #80a0d0; }
.ptabs .grn { color: #18b078; }
.ptabs .red { color: #cc5a50; }
.ptabs .bright { color: #e8e8e8; }
.pmain { flex: 1; min-width: 0; display: flex; flex-direction: column; gap: 3px; padding: 10px 0 0 11px; }
.pmain > * { flex: none; }
.crumb { display: flex; align-items: center; gap: 11px; height: 24px; padding: 0 3px; margin-bottom: 19px; }
.crumb span { flex: 1; }
.crumb .i:last-child { opacity: .7; }
.idrow { display: flex; height: 24px; margin-bottom: 11px; background: #1d1d1d; border: 1px solid #444; border-radius: 4px; }
.idrow .dd { height: 22px; padding: 0 5px; border-width: 0 1px 0 0; background: #282828; border-radius: 0; }
.idrow input { flex: 1; padding-left: 9px; }
.panel { background: #3e3e3e; border-radius: 5px; }
.ptitle { display: flex; align-items: center; width: 100%; height: 31px; padding: 0 8px 0 10px; gap: 5px; }
.ptitle .c { width: 14px; height: 14px; transform: rotate(-90deg); opacity: .8; }
.ptitle.open .c { transform: none; }
.ptitle.sub { padding-left: 28px; margin-top: 13px; }
.ptitle.open { margin-bottom: 11px; }
.grip { margin-left: auto; width: 14px; height: 6px; background: radial-gradient(circle, #999 1px, transparent 1px) 0 0 / 4px 3px; }
.vec + .vec { margin-top: 8px; }
.vec { display: grid; gap: 1px; }
.f { display: flex; align-items: center; }
.f label { width: 96px; margin-right: 13px; text-align: right; }
.f input { height: 24px; width: 104px; text-align: center; background: #545454; }
.vec .f:first-child input { border-radius: 4px 4px 0 0; }
.vec .f:last-child input { border-radius: 0 0 4px 4px; }
.f > .i { margin: 0 14px 0 4px; opacity: .7; }
.f b { width: 5px; height: 5px; border-radius: 50%; background: #e6e6e6; }
.f .choice { width: 104px; padding: 0 2px 0 8px; background: #282828; border: 0; gap: 0; }
.f select { flex: 1; }
.vscroll { width: 5px; margin: 12px 3px 88px 2px; border-radius: 3px; background: #4a4a4a; }

/* coloured zones with their captions */
.zone {
  position: absolute;
  pointer-events: none;
  white-space: nowrap;
  font: 900 80px/80px "Noto Sans CJK JP", sans-serif;
}
.pink { inset: 2px 3px 12px 0; background: rgb(255 0 116 / .33); color: #f7a8c8; text-align: center; padding-top: 146px; }
.latin { font: bold 88px/80px "Liberation Sans", sans-serif; }
.green { inset: -4px -1px -10px 0; background: rgb(0 240 140 / .33); color: #96fad8; padding-left: 347px; }
.blue { inset: 3px 0 8px 0; background: rgb(0 174 255 / .43); color: #b2d7ff; padding: 184px 0 0 8px; }
.yellow { inset: 4px 8px -17px 8px; background: rgb(224 178 0 / .27); color: #feebae; z-index: 2; padding-top: 208px; }
.yellow span { margin-left: -7px; }

/* status bar */
.status { height: 27px; flex: none; display: flex; align-items: center; padding: 0 11px 0 15px; color: #a0a0a0; }
.hints { display: flex; }
.hints span { width: 311px; }
.hints svg { width: 14px; height: 20px; display: block; }
.status p { margin-left: auto; white-space: nowrap; }
.desktop { height: 8px; flex: none; padding: 2px 139px 0 137px; }
.dock { height: 20px; border-radius: 16px; background: linear-gradient(90deg, #56689a, #5a6680 16%, #8f7470 32%, #a58055 55%, #b08e60 85%, #93806a); }
```

FILE: grid.js
```js
// Perspective projection of the ground plane (z = 0) into the 3D view.
const view = { cx: 792, cy: 529, focal: 1100, dist: 17.86, sinP: 0.4547, cosP: 0.8906, sinA: 0.4220, cosA: 0.9066 };

function depth(x, y) {
  return view.dist + view.cosP * (-view.cosA * x + view.sinA * y);
}

function project(x, y) {
  const away = -view.cosA * x + view.sinA * y;
  const side = view.sinA * x + view.cosA * y;
  const d = depth(x, y);
  return (view.cx + view.focal * side / d).toFixed(1) + " " + (view.cy - view.focal * view.sinP * away / d).toFixed(1);
}

// Line between two ground points, cut off just in front of the camera.
function line(a, b) {
  const near = 1;
  let da = depth(...a), db = depth(...b);
  if (da < near && db < near) return "";
  const cut = (p, q, dp, dq) => {
    const t = (near - dp) / (dq - dp);
    return [p[0] + (q[0] - p[0]) * t, p[1] + (q[1] - p[1]) * t];
  };
  if (da < near) a = cut(a, b, da, db);
  else if (db < near) b = cut(b, a, db, da);
  return "M" + project(...a) + "L" + project(...b);
}

const size = 110;
let minor = "", major = "";
for (let i = -size; i <= size; i++) {
  if (i === 0) continue;
  const d = line([i, -size], [i, size]) + line([-size, i], [size, i]);
  if (i % 10 === 0) major += d; else minor += d;
}
document.getElementById("minor").setAttribute("d", minor);
document.getElementById("major").setAttribute("d", major);
document.getElementById("axisX").setAttribute("d", line([-size, 0], [size, 0]));
document.getElementById("axisY").setAttribute("d", line([0, -size], [0, size]));
```
